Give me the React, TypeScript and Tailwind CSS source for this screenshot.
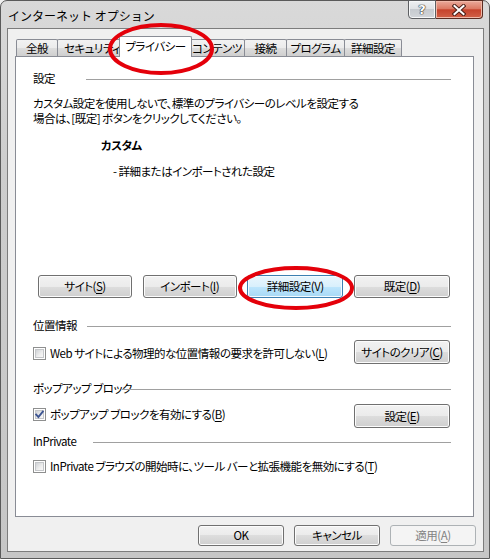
import React from "react";

const BTN =
  "flex items-center justify-center rounded-[3px] border border-[#707070] bg-[linear-gradient(#f2f2f2_0%,#ebebeb_50%,#dddddd_50%,#cfcfcf_100%)] shadow-[inset_0_0_0_1px_#fcfcfc] text-black whitespace-nowrap";
const BTN_HOT =
  "flex items-center justify-center rounded-[3px] border border-[#3c7fb1] bg-[linear-gradient(#eaf6fd_0%,#d9f0fc_50%,#bee6fd_50%,#a7d9f5_100%)] shadow-[inset_0_0_0_1px_#f4fbff] text-black whitespace-nowrap";
const BTN_DIS =
  "flex items-center justify-center rounded-[3px] border border-[#adb2b5] bg-[#f4f4f4] text-[#838383] whitespace-nowrap";

const TAB =
  "flex items-center justify-center h-[17px] border border-b-0 border-[#898c95] rounded-t-[2px] bg-[linear-gradient(#f2f2f2_0%,#ebebeb_50%,#dddddd_50%,#cfcfcf_100%)] whitespace-nowrap overflow-visible";

function U({ children }: { children: React.ReactNode }) {
  return <span className="underline underline-offset-[2px] decoration-1">{children}</span>;
}

function Check({ checked }: { checked?: boolean }) {
  return (
    <span className="relative block w-[13px] h-[13px] shrink-0 border border-[#8e8f8f] bg-white p-[1px]">
      <span className="block w-full h-full border border-[#c4c6c9] bg-[linear-gradient(135deg,#cfd2d6_0%,#eeeeee_60%,#f8f8f8_100%)]" />
      {checked && (
        <svg className="absolute left-0 top-0" width="11" height="11" viewBox="0 0 11 11">
          <path d="M2.2 5.6 L4.4 8 L8.8 2.6" fill="none" stroke="#3d5592" strokeWidth="1.9" strokeLinecap="square" />
        </svg>
      )}
    </span>
  );
}

function Header({ label, w, mt }: { label: string; w: string; mt: string }) {
  return (
    <div className={`flex items-center h-[16px] ${mt}`}>
      <span className={`${w} shrink-0 whitespace-nowrap`}>{label}</span>
      <div className="flex-1 h-px bg-[#a0a0a0] mt-[2px]" />
    </div>
  );
}

export default function App() {
  return (
    <div className="w-[490px] h-[559px] overflow-hidden bg-[#f0f0f0]">
      <div className="relative w-[490px] h-[559px] flex flex-col rounded-t-[7px] border border-[#5a5a5a] bg-[linear-gradient(180deg,#d9d9d9_0%,#cdcdcd_30%,#c6c6c6_100%)] text-[11.5px] leading-[15px] tracking-[-0.5px] text-black [font-family:'Noto_Sans_CJK_JP','Noto_Sans',sans-serif] [font-feature-settings:'palt']">
        {/* Title bar */}
        <div className="flex h-[27px] shrink-0 pl-[7px] pr-[6px]">
          <span className="self-center mt-[2px] text-[12px] tracking-normal [font-feature-settings:normal] text-black whitespace-nowrap">インターネット オプション</span>
          <div className="flex-1" />
          <div className="flex self-start -mt-px">
            <div className="w-[28px] h-[19px] flex items-center justify-center border border-[#5d5f62] rounded-bl-[4px] bg-[linear-gradient(#eef0f2_0%,#dfe2e5_45%,#c6cacf_50%,#d3d6da_100%)] shadow-[inset_0_0_0_1px_#f6f7f8]">
              <span className="text-white font-bold text-[13px] leading-none tracking-normal [text-shadow:0_0_1px_#222,0_0_1px_#222,0_0_1px_#222] [font-family:'DejaVu_Sans',sans-serif]">?</span>
            </div>
            <div className="w-[47px] h-[19px] flex items-center justify-center border border-l-0 border-[#5b2c22] rounded-br-[4px] bg-[linear-gradient(#eaaa9b_0%,#dc7a64_45%,#c6432c_52%,#d26148_100%)] shadow-[inset_0_0_0_1px_#f0b8a8]">
              <svg width="14" height="12" viewBox="0 0 14 12">
                <path d="M2.5 2 L11.5 10 M11.5 2 L2.5 10" stroke="#4a1e16" strokeWidth="4" strokeLinecap="square" />
                <path d="M2.5 2 L11.5 10 M11.5 2 L2.5 10" stroke="#ffffff" strokeWidth="2" strokeLinecap="square" />
              </svg>
            </div>
          </div>
        </div>

        {/* Client area */}
        <div className="flex flex-col ml-[6px] mr-[5px] h-[524px] border border-[#7c7c7c] bg-[#f0f0f0]">
          {/* Tabs */}
          <div className="flex items-end h-[20px] mt-[7px] ml-[8px] relative z-10">
            <div className={`${TAB} w-[42px]`}>全般</div>
            <div className={`${TAB} w-[65px] -ml-px justify-start pl-[6px]`}>セキュリティ</div>
            <div className="relative z-20 -ml-[3px] -mb-px w-[73px] h-[21px] flex items-center justify-center pb-[2px] border border-b-0 border-[#898c95] rounded-t-[2px] bg-white whitespace-nowrap">
              プライバシー
            </div>
            <div className={`${TAB} w-[56px] -ml-[3px]`}>コンテンツ</div>
            <div className={`${TAB} w-[43px] -ml-px`}>接続</div>
            <div className={`${TAB} w-[59px] -ml-px`}>プログラム</div>
            <div className={`${TAB} w-[58px] -ml-px`}>詳細設定</div>
          </div>

          {/* Panel */}
          <div className="ml-[7px] w-[459px] h-[461px] border border-[#898c95] bg-white pl-[17px] pr-[22px] flex flex-col">
            <Header label="設定" w="w-[53px]" mt="mt-[13px]" />
            <div className="mt-[10px]">
              <div className="whitespace-nowrap">カスタム設定を使用しないで、標準のプライバシーのレベルを設定する</div>
              <div className="whitespace-nowrap">場合は、[既定] ボタンをクリックしてください。</div>
            </div>
            <div className="mt-[12px] pl-[68px] font-bold">カスタム</div>
            <div className="mt-[11px] pl-[80px]">- 詳細またはインポートされた設定</div>

            <div className="mt-[96px] flex justify-between pl-[5px] pr-[1px]">
              <button className={`${BTN} w-[94px] h-[23px]`}>サイト(<U>S</U>)</button>
              <button className={`${BTN} w-[94px] h-[23px]`}>インポート(<U>I</U>)</button>
              <button className={`${BTN_HOT} w-[96px] h-[23px]`}>詳細設定(V)</button>
              <button className={`${BTN} w-[96px] h-[23px]`}>既定(<U>D</U>)</button>
            </div>

            <Header label="位置情報" w="w-[54px]" mt="mt-[19px]" />
            <div className="mt-[7px] flex justify-between items-start pr-[1px]">
              <label className="flex items-center h-[15px] mt-[6px] gap-[4px] whitespace-nowrap">
                <Check />
                <span>Web サイトによる物理的な位置情報の要求を許可しない(<U>L</U>)</span>
              </label>
              <button className={`${BTN} w-[96px] h-[24px]`}>サイトのクリア(<U>C</U>)</button>
            </div>

            <Header label="ポップアップ ブロック" w="w-[89px]" mt="mt-[16px]" />
            <div className="mt-[8px] flex justify-between items-start pr-[1px]">
              <label className="flex items-center h-[15px] mt-[3px] gap-[4px] whitespace-nowrap">
                <Check checked />
                <span>ポップアップ ブロックを有効にする(<U>B</U>)</span>
              </label>
              <button className={`${BTN} w-[96px] h-[24px]`}>設定(<U>E</U>)</button>
            </div>

            <Header label="InPrivate" w="w-[60px]" mt="mt-[5px]" />
            <label className="mt-[10px] flex items-center h-[15px] gap-[4px] whitespace-nowrap">
              <Check />
              <span>InPrivate ブラウズの開始時に、ツール バーと拡張機能を無効にする(<U>T</U>)</span>
            </label>
          </div>

          {/* Bottom buttons */}
          <div className="flex justify-end gap-[10px] mt-[8px] pr-[7px]">
            <button className={`${BTN} w-[86px] h-[21px]`}>OK</button>
            <button className={`${BTN} w-[86px] h-[21px]`}>キャンセル</button>
            <button className={`${BTN_DIS} w-[86px] h-[21px]`}>適用(<U>A</U>)</button>
          </div>
        </div>

        {/* Red annotation ellipses */}
        <svg className="absolute left-0 top-0 pointer-events-none z-30" width="490" height="559" viewBox="0 0 490 559">
          <ellipse cx="160" cy="48" rx="51" ry="24" fill="none" stroke="#e4000a" strokeWidth="4" />
          <ellipse cx="295" cy="287" rx="56" ry="20" fill="none" stroke="#e4000a" strokeWidth="4" />
        </svg>
      </div>
    </div>
  );
}
